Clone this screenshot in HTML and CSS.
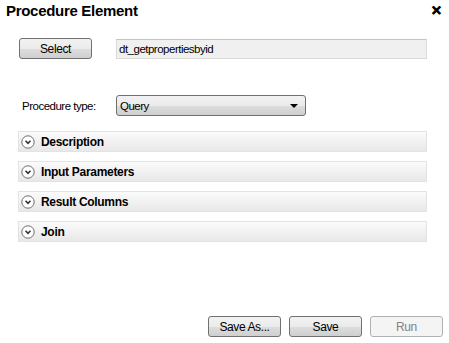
FILE: index.html
```html
<!DOCTYPE html>
<html lang="en">
<head>
    <meta charset="UTF-8">
    <title>Procedure Element</title>
    <link rel="stylesheet" href="styles.css">
</head>
<body>
    <div class="dialog">
        <div class="header">
            <span class="title">Procedure Element</span>
            <span class="close">&#x2715;</span>
        </div>

        <div class="row name-row">
            <button class="btn">Select</button>
            <div class="field">dt_getpropertiesbyid</div>
        </div>

        <div class="row type-row">
            <label class="label">Procedure type:</label>
            <div class="select">
                <span>Query</span>
                <span class="arrow"></span>
            </div>
        </div>

        <div class="sections">
            <div class="section">
                <svg class="toggle" width="14" height="14" viewBox="0 0 14 14"><circle cx="7" cy="7" r="6.2" fill="#fff" stroke="#6d6d6d"/><path d="M4.5 5.8 L7 8.3 L9.5 5.8" fill="none" stroke="#333" stroke-width="1.6"/></svg>
                Description
            </div>
            <div class="section">
                <svg class="toggle" width="14" height="14" viewBox="0 0 14 14"><circle cx="7" cy="7" r="6.2" fill="#fff" stroke="#6d6d6d"/><path d="M4.5 5.8 L7 8.3 L9.5 5.8" fill="none" stroke="#333" stroke-width="1.6"/></svg>
                Input Parameters
            </div>
            <div class="section">
                <svg class="toggle" width="14" height="14" viewBox="0 0 14 14"><circle cx="7" cy="7" r="6.2" fill="#fff" stroke="#6d6d6d"/><path d="M4.5 5.8 L7 8.3 L9.5 5.8" fill="none" stroke="#333" stroke-width="1.6"/></svg>
                Result Columns
            </div>
            <div class="section">
                <svg class="toggle" width="14" height="14" viewBox="0 0 14 14"><circle cx="7" cy="7" r="6.2" fill="#fff" stroke="#6d6d6d"/><path d="M4.5 5.8 L7 8.3 L9.5 5.8" fill="none" stroke="#333" stroke-width="1.6"/></svg>
                Join
            </div>
        </div>

        <div class="footer">
            <button class="btn">Save As...</button>
            <button class="btn">Save</button>
            <button class="btn" disabled>Run</button>
        </div>
    </div>
</body>
</html>
```

FILE: styles.css
```css
* {
    box-sizing: border-box;
}
body, html {
    margin: 0;
    background-color: #fff;
    font-family: 'Liberation Sans', Arial, sans-serif;
    font-size: 11px;
    letter-spacing: -0.4px;
    color: #000;
}
.dialog {
    width: 449px;
    height: 343px;
    display: flex;
    flex-direction: column;
}
.header {
    height: 20px;
    display: flex;
    align-items: center;
    justify-content: space-between;
    padding: 0 7px 0 6px;
}
.title {
    font-size: 15px;
    font-weight: bold;
    letter-spacing: -0.3px;
}
.close {
    font-size: 13px;
    font-weight: bold;
    -webkit-text-stroke: 0.6px #000;
}
.row {
    display: flex;
    align-items: center;
}
.name-row {
    margin-top: 18px;
    padding-left: 19px;
    gap: 24px;
}
.btn {
    width: 73px;
    height: 21px;
    padding: 0;
    border: 1px solid #707070;
    border-radius: 3px;
    background: linear-gradient(#f2f2f2 0%, #ebebeb 50%, #dddddd 51%, #cfcfcf 100%);
    font-family: inherit;
    font-size: 12px;
    letter-spacing: -0.4px;
    color: #000;
}
.btn:disabled {
    background: #f4f4f4;
    border-color: #adb2b5;
    color: #838383;
}
.field {
    width: 311px;
    height: 20px;
    padding: 2px 2px;
    line-height: 15px;
    font-size: 11.5px;
    letter-spacing: -0.5px;
    border: 1px solid #dadada;
    border-top-color: #c4c4c4;
    background-color: #f0f0f0;
}
.type-row {
    margin-top: 36px;
    padding-left: 22px;
}
.label {
    width: 94px;
    font-size: 11.5px;
    letter-spacing: -0.5px;
}
.select {
    width: 190px;
    height: 21px;
    display: flex;
    align-items: center;
    justify-content: space-between;
    padding: 0 7px 0 3px;
    font-size: 11.5px;
    letter-spacing: -0.5px;
    border: 1px solid #707070;
    border-radius: 3px;
    background: linear-gradient(#f2f2f2 0%, #ebebeb 50%, #dddddd 51%, #cfcfcf 100%);
}
.arrow {
    width: 0;
    height: 0;
    border-left: 4px solid transparent;
    border-right: 4px solid transparent;
    border-top: 4px solid #000;
}
.sections {
    margin-top: 15px;
    padding-left: 18px;
    display: flex;
    flex-direction: column;
    gap: 9px;
}
.section {
    width: 409px;
    height: 21px;
    display: flex;
    align-items: center;
    gap: 6px;
    padding-left: 2px;
    border: 1px solid #e3e3e3;
    background: linear-gradient(#fbfbfb, #e8e8e8);
    font-weight: bold;
    font-size: 12px;
    letter-spacing: -0.3px;
}
.toggle {
    flex: none;
}
.footer {
    margin-top: auto;
    margin-bottom: 6px;
    padding-right: 6px;
    display: flex;
    justify-content: flex-end;
    gap: 8px;
}
```
